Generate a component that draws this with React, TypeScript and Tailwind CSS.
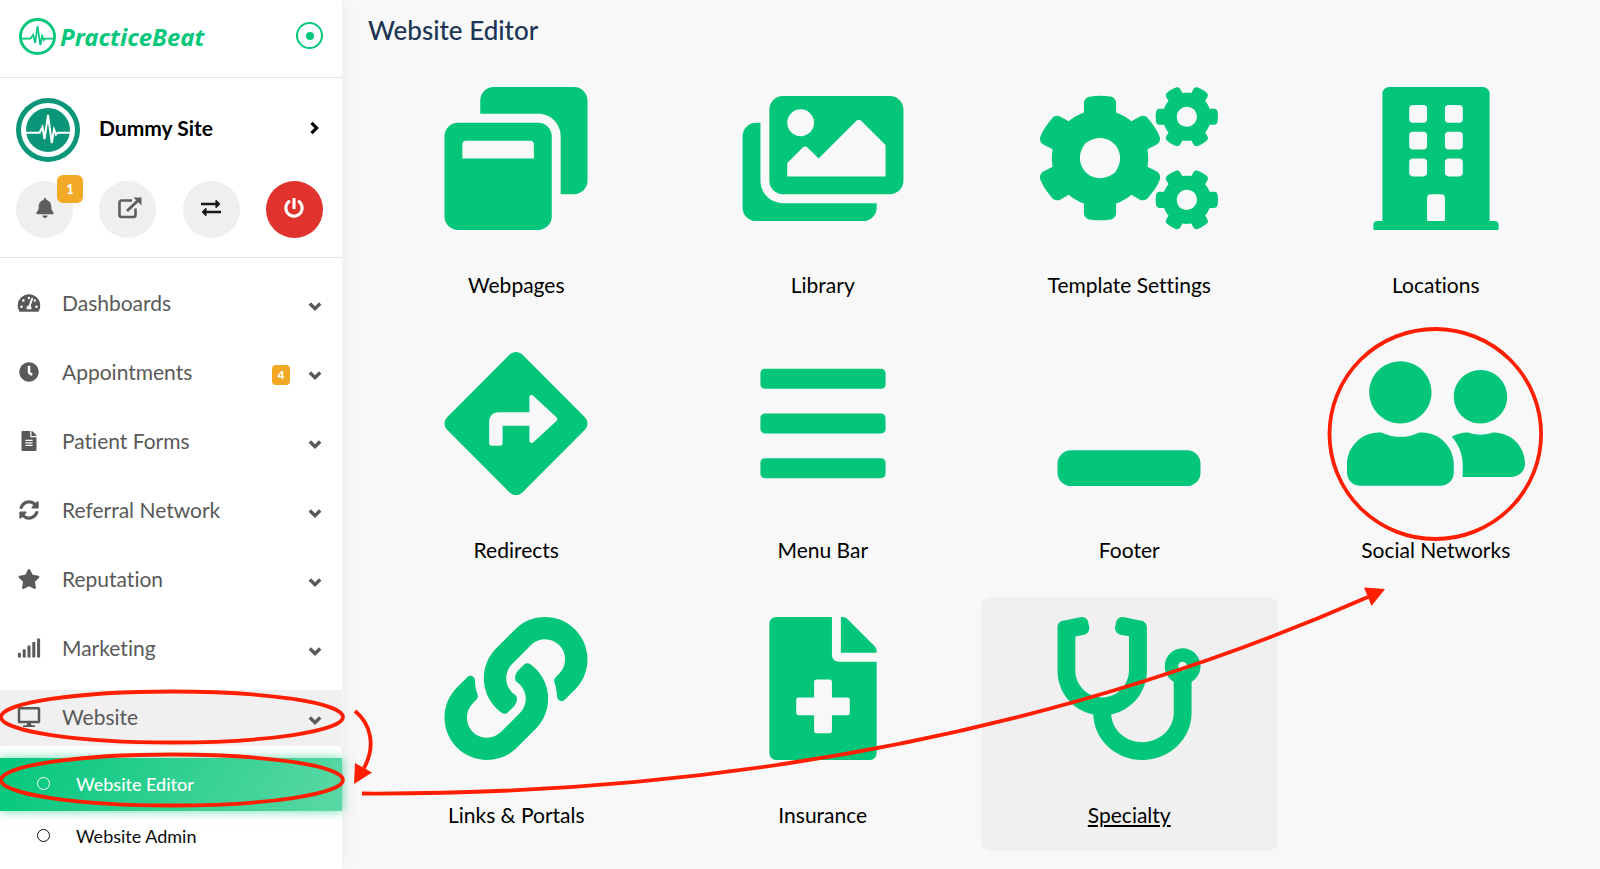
import React from 'react';
import {
  FaBars,
  FaBell,
  FaBuilding,
  FaClock,
  FaCogs,
  FaDesktop,
  FaDirections,
  FaFileAlt,
  FaFileMedical,
  FaImages,
  FaLink,
  FaPowerOff,
  FaSignal,
  FaStar,
  FaStethoscope,
  FaSyncAlt,
  FaTachometerAlt,
  FaUserFriends,
  FaWindowMinimize,
} from 'react-icons/fa';

interface IconProps {
  className?: string;
}

interface NavItem {
  label: string;
  icon: React.ComponentType<IconProps>;
  badge?: number;
  active?: boolean;
}

interface Tile {
  label: string;
  icon: React.ComponentType<IconProps>;
  highlighted?: boolean;
}

const PagesIcon: React.FC<IconProps> = ({ className }) => (
  <svg viewBox="0 0 512 512" fill="currentColor" className={className} aria-hidden="true">
    <path d="M176 0h288c26.500 0 48 21.500 48 48v288c0 26.500-21.500 48-48 48h-48V176c0-44.200-35.800-80-80-80H128V48c0-26.500 21.500-48 48-48z" />
    <path
      fillRule="evenodd"
      d="M48 128h288c26.500 0 48 21.500 48 48v288c0 26.500-21.500 48-48 48H48c-26.500 0-48-21.500-48-48V176c0-26.500 21.500-48 48-48zM64 204v52h256v-52c0-6.600-5.400-12-12-12H76c-6.600 0-12 5.400-12 12z"
    />
  </svg>
);

const ChevronIcon: React.FC<IconProps> = ({ className }) => (
  <svg viewBox="0 0 14 14" fill="none" stroke="currentColor" strokeWidth="3.400" className={className} aria-hidden="true">
    <path d="M1.800 4.500 7 9.600 12.200 4.500" />
  </svg>
);

const ChevronRightIcon: React.FC<IconProps> = ({ className }) => (
  <svg viewBox="0 0 14 14" fill="none" stroke="currentColor" strokeWidth="3.200" className={className} aria-hidden="true">
    <path d="M4.500 1.800 9.600 7 4.500 12.200" />
  </svg>
);

const ExternalIcon: React.FC<IconProps> = ({ className }) => (
  <svg viewBox="0 0 24 22" fill="none" stroke="currentColor" className={className} aria-hidden="true">
    <path d="M14 3.500H3.500a2 2 0 0 0-2 2V18a2 2 0 0 0 2 2H15.500a2 2 0 0 0 2-2V11.500" strokeWidth="2.600" />
    <path d="M9 14 20 3.500" strokeWidth="3" />
    <path d="M15.500 0.500H23.500V8.500z" fill="currentColor" stroke="none" />
  </svg>
);

const SwapIcon: React.FC<IconProps> = ({ className }) => (
  <svg viewBox="0 0 22 18" fill="none" stroke="currentColor" strokeWidth="2.400" className={className} aria-hidden="true">
    <path d="M1 5h18M21 13H3" />
    <path d="M16 1.500 19.500 5 16 8.500zM6 9.500 2.500 13 6 16.500z" fill="currentColor" strokeWidth="1.200" strokeLinejoin="round" />
  </svg>
);

const LogoMark: React.FC<IconProps> = ({ className }) => (
  <svg viewBox="0 0 64 64" fill="none" stroke="currentColor" className={className} aria-hidden="true">
    <circle cx="32" cy="32" r="29.500" strokeWidth="5" />
    <path d="M4 35.500H20L24.500 29L28 43L32 14L37 47L40 31L43 38L45 35.500H60" strokeWidth="3" />
  </svg>
);

const Avatar: React.FC<IconProps> = ({ className }) => (
  <svg viewBox="0 0 64 64" fill="none" stroke="#fff" className={className} aria-hidden="true">
    <circle cx="32" cy="32" r="32" fill="#0b9679" stroke="none" />
    <circle cx="32" cy="32" r="24.500" strokeWidth="5" />
    <path d="M10 34.700H23.500L26.500 29L28.500 41L32 17L35.800 45L38 31.500L40 36.500L41.500 34.700H54" strokeWidth="2" />
  </svg>
);

const navItems: NavItem[] = [
  { label: 'Dashboards', icon: FaTachometerAlt },
  { label: 'Appointments', icon: FaClock, badge: 4 },
  { label: 'Patient Forms', icon: FaFileAlt },
  { label: 'Referral Network', icon: FaSyncAlt },
  { label: 'Reputation', icon: FaStar },
  { label: 'Marketing', icon: FaSignal },
  { label: 'Website', icon: FaDesktop, active: true },
];

const tiles: Tile[] = [
  { label: 'Webpages', icon: PagesIcon },
  { label: 'Library', icon: FaImages },
  { label: 'Template Settings', icon: FaCogs },
  { label: 'Locations', icon: FaBuilding },
  { label: 'Redirects', icon: FaDirections },
  { label: 'Menu Bar', icon: FaBars },
  { label: 'Footer', icon: FaWindowMinimize },
  { label: 'Social Networks', icon: FaUserFriends },
  { label: 'Links & Portals', icon: FaLink },
  { label: 'Insurance', icon: FaFileMedical },
  { label: 'Specialty', icon: FaStethoscope, highlighted: true },
];

const Sidebar: React.FC = () => (
  <aside className="w-[342px] flex-shrink-0 bg-white shadow-[0_0_20px_rgba(0,0,0,0.05)]">
    {/* Brand */}
    <div className="h-[78px] pl-[19px] pr-[19px] pb-1 flex items-center justify-between border-b border-[#e4e4e4]">
      <a href="#home" className="flex items-center gap-1 text-[#05c77b]">
        <LogoMark className="w-[37px] h-[37px]" />
        <span className="font-['Noto_Sans',sans-serif] text-[24px] leading-8 font-bold italic">PracticeBeat</span>
      </a>
      <button aria-label="Collapse menu" className="w-[27px] h-[27px] mb-[2px] rounded-full border-2 border-[#05c77b] flex items-center justify-center">
        <span className="w-2 h-2 rounded-full bg-[#05c77b]" />
      </button>
    </div>

    {/* Site switcher and quick actions */}
    <div className="pl-4 pr-[19px] pt-5 pb-[19px] border-b border-[#e4e4e4]">
      <button className="w-full flex items-center text-left">
        <Avatar className="w-16 h-16" />
        <span className="ml-[19px] flex-1 pb-1 text-[21px] leading-7 font-bold text-black">Dummy Site</span>
        <ChevronRightIcon className="w-[14px] h-[14px] mr-[2px] mb-1 text-black" />
      </button>
      <div className="mt-[19px] flex justify-between">
        <button aria-label="Notifications" className="relative w-[57px] h-[57px] rounded-full bg-[#efefef] text-[#5f5f5f] flex items-center justify-center">
          <FaBell className="w-5 h-5 mb-1" />
          <span className="absolute -top-[6px] -right-[10px] w-[26px] h-7 rounded-md bg-[#f2a926] text-white text-[13px] leading-7 font-black text-center">
            1
          </span>
        </button>
        <button aria-label="Open site" className="w-[57px] h-[57px] rounded-full bg-[#efefef] text-[#5f5f5f] flex items-center justify-center">
          <ExternalIcon className="w-6 h-[22px] ml-1 mb-1" />
        </button>
        <button aria-label="Switch site" className="w-[57px] h-[57px] rounded-full bg-[#efefef] text-[#15191c] flex items-center justify-center">
          <SwapIcon className="w-[22px] h-[18px] mb-1" />
        </button>
        <button aria-label="Log out" className="w-[57px] h-[57px] rounded-full bg-[#e1332e] text-white flex items-center justify-center">
          <FaPowerOff className="w-5 h-5 mb-1" />
        </button>
      </div>
    </div>

    {/* Navigation */}
    <nav className="pt-[18px]">
      <ul className="flex flex-col gap-[13px]">
        {navItems.map(({ label, icon: Icon, badge, active }) => (
          <li key={label}>
            <button
              className={`w-full h-14 pl-[17px] pr-5 pb-[2px] flex items-center text-left text-[#595959] ${active ? 'bg-[#f0f0f0]' : ''}`}
            >
              <span className="w-6 flex justify-center">
                <Icon className="h-5 w-6" />
              </span>
              <span className="ml-[21px] flex-1 text-[21px] leading-7">{label}</span>
              {badge && (
                <span className="w-[18px] h-5 mt-[6px] mr-[18px] rounded bg-[#f2a926] text-white text-[12px] leading-5 font-black text-center">{badge}</span>
              )}
              <ChevronIcon className="w-[14px] h-[14px] mt-[6px]" />
            </button>
          </li>
        ))}
      </ul>
      <ul className="mt-3">
        <li>
          <a
            href="#editor"
            className="h-[53px] pl-[37px] pb-[2px] flex items-center bg-[linear-gradient(118deg,#03c77c,#5bd8a5)] text-white shadow-[0_0_10px_rgba(3,199,124,0.6)]"
          >
            <span className="w-[13px] h-[13px] rounded-full border border-white" />
            <span className="ml-[26px] text-[18px] leading-6 font-medium">Website Editor</span>
          </a>
        </li>
        <li>
          <a href="#admin" className="h-[52px] pl-[37px] pb-[2px] flex items-center text-[#0c0c0c]">
            <span className="w-[13px] h-[13px] mb-[2px] rounded-full border border-[#0c0c0c]" />
            <span className="ml-[26px] text-[18px] leading-6">Website Admin</span>
          </a>
        </li>
      </ul>
    </nav>
  </aside>
);

// Hand-drawn red marks that walk the reader through the steps
const Annotations: React.FC = () => (
  <svg className="absolute inset-0 w-full h-full pointer-events-none" fill="none" stroke="#ff1e00" strokeWidth="3.800" aria-hidden="true">
    <ellipse cx="172" cy="717" rx="171" ry="25.500" />
    <ellipse cx="172" cy="780" rx="171" ry="25.500" />
    <ellipse cx="1435.300" cy="434" rx="105.800" ry="105" />
    <path d="M355 711C371 724 376 746 364 768" />
    <path d="M354 784L355 763L372 772.500z" fill="#ff1e00" stroke="none" />
    <path d="M362 793.500Q915 796 1368 597" />
    <path d="M1385 589L1364 587.500L1371.500 606z" fill="#ff1e00" stroke="none" />
  </svg>
);

const App: React.FC = () => (
  <div className="relative min-h-screen flex bg-[#f8f8f8] font-['Lato',sans-serif] [font-variant-ligatures:none]">
    <Sidebar />
    <main className="flex-1 pl-[26px] pr-4">
      <h1 className="pt-[14px] text-[26px] leading-8 font-medium text-[#1c3554]">Website Editor</h1>
      <div className="mt-[21px] grid grid-cols-4 gap-x-[10px] gap-y-[11px]">
        {tiles.map(({ label, icon: Icon, highlighted }) => (
          <a
            key={label}
            href="#tile"
            className={`h-[254px] pt-5 flex flex-col items-center rounded-[10px] ${highlighted ? 'bg-[#f0f0f0] underline underline-offset-2' : ''}`}
          >
            <Icon className="h-[143px] w-[178px] text-[#03c67b]" />
            <span className="mt-[41px] text-[21px] leading-7 text-black">{label}</span>
          </a>
        ))}
      </div>
    </main>
    <Annotations />
  </div>
);

export default App;
